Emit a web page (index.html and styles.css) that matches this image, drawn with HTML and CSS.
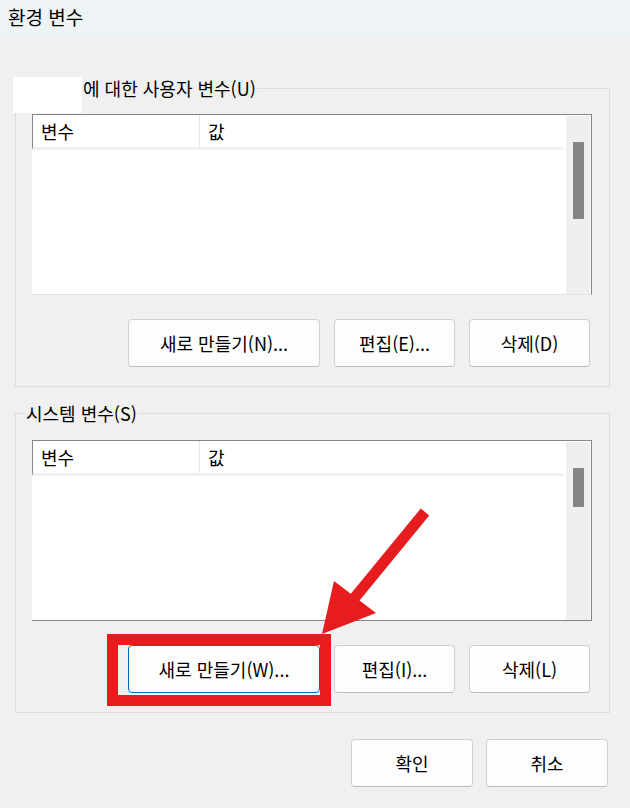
FILE: index.html
```html
<!DOCTYPE html>
<html lang="ko">
<head>
  <meta charset="UTF-8">
  <meta name="viewport" content="width=device-width, initial-scale=1.0">
  <title>환경 변수</title>
  <link rel="stylesheet" href="styles.css">
</head>
<body>
  <div class="window">
    <div class="titlebar">환경 변수</div>

    <div class="content">
      <fieldset class="group">
        <legend><span class="user-name"></span>에 대한 사용자 변수(U)</legend>
        <div class="redact"></div>
        <div class="list list-user">
          <div class="list-view">
            <div class="list-header">
              <span class="col col-name">변수</span>
              <span class="col col-value">값</span>
            </div>
            <div class="list-body"></div>
          </div>
          <div class="scrollbar"><div class="thumb thumb-user"></div></div>
        </div>
        <div class="button-row">
          <button class="btn btn-wide">새로 만들기(N)...</button>
          <button class="btn">편집(E)...</button>
          <button class="btn">삭제(D)</button>
        </div>
      </fieldset>

      <fieldset class="group">
        <legend>시스템 변수(S)</legend>
        <div class="list list-system">
          <div class="list-view">
            <div class="list-header">
              <span class="col col-name">변수</span>
              <span class="col col-value">값</span>
            </div>
            <div class="list-body"></div>
          </div>
          <div class="scrollbar"><div class="thumb thumb-system"></div></div>
        </div>
        <div class="button-row">
          <button class="btn btn-wide focused">새로 만들기(W)...</button>
          <button class="btn">편집(I)...</button>
          <button class="btn">삭제(L)</button>
        </div>
      </fieldset>

      <div class="dialog-buttons">
        <button class="btn btn-dialog">확인</button>
        <button class="btn btn-dialog">취소</button>
      </div>
    </div>

    <!-- red annotation drawn over the dialog -->
    <svg class="annotation" width="630" height="808" viewBox="0 0 630 808">
      <rect x="112.5" y="639.5" width="213" height="61" fill="none" stroke="#e61c1f" stroke-width="11"/>
      <line x1="425" y1="512" x2="352" y2="601" stroke="#e61c1f" stroke-width="11"/>
      <polygon points="322,634 334,581 376,613" fill="#e61c1f"/>
    </svg>
  </div>
</body>
</html>
```

FILE: styles.css
```css
body {
  margin: 0;
  font-family: "Noto Sans CJK KR", "Noto Sans", sans-serif;
  font-size: 18px;
  color: #000;
  background-color: #f0f0f0;
}

.window {
  position: relative;
  width: 630px;
  height: 808px;
  overflow: hidden;
  background-color: #f0f0f0;
}

.titlebar {
  height: 37px;
  line-height: 34px;
  padding-left: 8px;
  font-size: 19px;
  background-color: #eef3f6;
}

.content {
  padding: 0 20px 0 15px;
}

.group {
  position: relative;
  margin: 0;
  padding: 0 17px 19px 16px;
  border: 1px solid #dcdcdc;
  min-width: 0;
}

.group:first-child {
  margin-top: 39px;
}

.group + .group {
  margin-top: 14px;
}

.group legend {
  margin-left: -7px;
  padding: 0 1px;
  line-height: 24px;
}

.user-name {
  display: inline-block;
  width: 57px;
}

/* blanked-out user name */
.redact {
  position: absolute;
  left: -3px;
  top: -23px;
  width: 69px;
  height: 36px;
  background-color: #fff;
}

.list {
  display: flex;
  height: 179px;
  margin-top: 14px;
  border: 1px solid #82878c;
  border-left: none;
  background-color: #fff;
}

.list-user {
  border-bottom-color: #e3e3e3;
}

.list-system {
  margin-top: 15px;
}

.list-view {
  flex: 1;
  display: flex;
  flex-direction: column;
}

.list-header {
  display: flex;
  height: 32px;
  border-left: 1px solid #82878c;
  border-bottom: 3px solid #f0f0f0;
  margin-right: 2px;
}

.col {
  line-height: 32px;
}

.col-name {
  width: 158px;
  padding-left: 8px;
  border-right: 1px solid #e5e5e5;
}

.col-value {
  padding-left: 8px;
}

.list-body {
  flex: 1;
}

.scrollbar {
  width: 24px;
  background-color: #efefef;
  border-right: 1px solid #fff;
  border-top: 1px solid #fff;
}

.thumb {
  width: 11px;
  margin: 26px 0 0 7px;
  background-color: #858585;
}

.thumb-user {
  height: 77px;
}

.thumb-system {
  height: 39px;
}

.button-row {
  display: flex;
  justify-content: flex-end;
  gap: 14px;
  margin-top: 24px;
  padding-right: 2px;
}

.dialog-buttons {
  display: flex;
  justify-content: flex-end;
  gap: 13px;
  margin-top: 26px;
  padding-right: 2px;
}

.btn {
  width: 121px;
  height: 48px;
  font-family: inherit;
  font-size: 18px;
  color: #000;
  background-color: #fdfdfd;
  border: 1px solid #d0d0d0;
  border-bottom-color: #bdbdbd;
  border-radius: 4px;
  padding: 0;
  cursor: pointer;
}

.btn-wide {
  width: 192px;
}

.btn-dialog {
  width: 122px;
}

.btn.focused {
  border: 1px solid #0067c0;
}

.annotation {
  position: absolute;
  left: 0;
  top: 0;
  pointer-events: none;
}
```
